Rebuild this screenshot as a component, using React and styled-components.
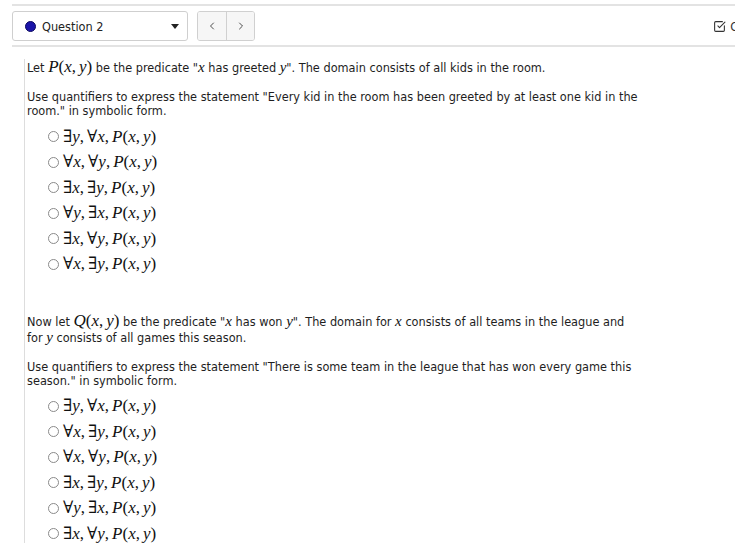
import React from 'react';
import styled, { createGlobalStyle } from 'styled-components';
import { SquareCheckBig, ChevronLeft, ChevronRight } from 'lucide-react';

const GlobalStyle = createGlobalStyle`
  html, body {
    margin: 0;
    padding: 0;
    background: #fff;
  }
  body {
    font-family: 'DejaVu Sans', 'Liberation Sans', sans-serif;
    color: #222;
    overflow: hidden;
  }
`;

const Page = styled.div`
  padding: 4px 0 0 12px;
  width: 735px;
  height: 552px;
  box-sizing: border-box;
  overflow: hidden;
`;

const Toolbar = styled.div`
  display: flex;
  align-items: center;
  border-top: 2px solid #e3e3e3;
  border-bottom: 2px solid #e3e3e3;
  padding: 5px 0 4px 0;
  height: 30px;
`;

const Select = styled.div`
  display: flex;
  align-items: center;
  width: 176px;
  height: 30px;
  box-sizing: border-box;
  border: 1px solid #cfcfcf;
  border-radius: 3px;
  padding: 0 8px 0 12px;
  font-family: 'DejaVu Sans Condensed', sans-serif;
  font-size: 12.6px;
  color: #222;
`;

const Dot = styled.span`
  width: 11px;
  height: 11px;
  border-radius: 50%;
  background: #1a14a8;
  border: 1px solid #0b0860;
  margin-right: 6px;
  box-sizing: border-box;
`;

const Caret = styled.span`
  margin-left: auto;
  width: 0;
  height: 0;
  border-left: 4px solid transparent;
  border-right: 4px solid transparent;
  border-top: 5px solid #222;
`;

const NavGroup = styled.div`
  display: flex;
  margin-left: 9px;
  border: 1px solid #d0d0d0;
  border-radius: 3px;
  overflow: hidden;
`;

const NavButton = styled.button`
  display: flex;
  align-items: center;
  justify-content: center;
  width: 28px;
  height: 28px;
  border: none;
  background: #f6f6f6;
  color: #222;
  padding: 0;
  & + & {
    border-left: 1px solid #d0d0d0;
  }
`;

const Status = styled.div`
  margin-left: auto;
  display: flex;
  align-items: center;
  gap: 4px;
  font-family: 'DejaVu Sans Condensed', sans-serif;
  font-size: 12.6px;
  color: #333;
  margin-right: -30px;
  white-space: nowrap;
`;

const Body = styled.div`
  margin: 12px 0 0 12px;
  border-left: 1px solid #ddd;
  padding: 0 0 0 2px;
  width: 613px;
  font-family: 'DejaVu Sans Condensed', 'DejaVu Sans', sans-serif;
  font-size: 12.6px;
  line-height: 14px;
  color: #1e1e1e;
`;

const Para = styled.p`
  margin: 0 0 15px 0;
  &:first-child {
    margin-top: 8px;
  }
`;

const Section = styled.div`
  & + & {
    margin-top: 39px;
  }
`;

const OptionList = styled.div`
  display: flex;
  flex-direction: column;
  gap: 6.5px;
  padding-left: 21px;
  margin-top: -6px;
`;

const Option = styled.label`
  display: flex;
  align-items: center;
  height: 19px;
`;

const Radio = styled.span`
  width: 9px;
  height: 9px;
  border: 1px solid #8a8a8a;
  border-radius: 50%;
  margin-right: 4px;
  flex-shrink: 0;
`;

const Math = styled.span`
  font-family: 'Liberation Serif', 'DejaVu Serif', serif;
  font-size: ${(p) => (p.small ? 15 : 17)}px;
  line-height: 16px;
  white-space: nowrap;
  color: #111;
`;

const I = styled.i`
  font-style: italic;
`;

const Sym = styled.span`
  font-style: normal;
`;

const Comma = styled.span`
  margin-right: 3px;
`;

const Pred = ({ name }) => (
  <>
    <I>{name}</I>
    <Sym>(</Sym>
    <I>x</I>
    <Comma>,</Comma>
    <I>y</I>
    <Sym>)</Sym>
  </>
);

const Formula = ({ q1, v1, q2, v2, name = 'P' }) => (
  <Math>
    <Sym>{q1}</Sym>
    <I>{v1}</I>
    <Comma>,</Comma>
    <Sym>{q2}</Sym>
    <I>{v2}</I>
    <Comma>,</Comma>
    <Pred name={name} />
  </Math>
);

const V = ({ children }) => (
  <Math small>
    <I>{children}</I>
  </Math>
);

const firstOptions = [
  ['∃', 'y', '∀', 'x'],
  ['∀', 'x', '∀', 'y'],
  ['∃', 'x', '∃', 'y'],
  ['∀', 'y', '∃', 'x'],
  ['∃', 'x', '∀', 'y'],
  ['∀', 'x', '∃', 'y'],
];

const secondOptions = [
  ['∃', 'y', '∀', 'x'],
  ['∀', 'x', '∃', 'y'],
  ['∀', 'x', '∀', 'y'],
  ['∃', 'x', '∃', 'y'],
  ['∀', 'y', '∃', 'x'],
  ['∃', 'x', '∀', 'y'],
];

const Options = ({ items }) => (
  <OptionList>
    {items.map(([q1, v1, q2, v2], i) => (
      <Option key={i}>
        <Radio />
        <Formula q1={q1} v1={v1} q2={q2} v2={v2} />
      </Option>
    ))}
  </OptionList>
);

export default function App() {
  return (
    <Page>
      <GlobalStyle />
      <Toolbar>
        <Select>
          <Dot />
          Question 2
          <Caret />
        </Select>
        <NavGroup>
          <NavButton>
            <ChevronLeft size={12} strokeWidth={1.6} />
          </NavButton>
          <NavButton>
            <ChevronRight size={12} strokeWidth={1.6} />
          </NavButton>
        </NavGroup>
        <Status>
          <SquareCheckBig size={13} strokeWidth={2} color="#333" />
          Check
        </Status>
      </Toolbar>
      <Body>
        <Section>
          <Para>
            Let{' '}
            <Math>
              <Pred name="P" />
            </Math>{' '}
            be the predicate "<V>x</V> has greeted <V>y</V>". The domain consists of all kids in the
            room.
          </Para>
          <Para>
            Use quantifiers to express the statement "Every kid in the room has been greeted by at
            least one kid in the room." in symbolic form.
          </Para>
          <Options items={firstOptions} />
        </Section>
        <Section>
          <Para>
            Now let{' '}
            <Math>
              <Pred name="Q" />
            </Math>{' '}
            be the predicate "<V>x</V> has won <V>y</V>". The domain for <V>x</V> consists of all
            teams in the league and for <V>y</V> consists of all games this season.
          </Para>
          <Para>
            Use quantifiers to express the statement "There is some team in the league that has won
            every game this season." in symbolic form.
          </Para>
          <Options items={secondOptions} />
        </Section>
      </Body>
    </Page>
  );
}
